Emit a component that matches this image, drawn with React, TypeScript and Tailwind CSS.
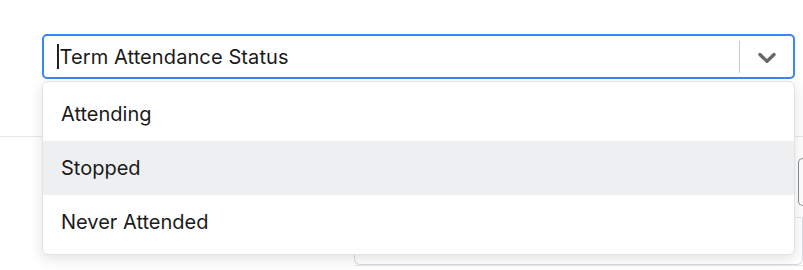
import React from "react";

export default function App() {
  const font = { fontFamily: 'Inter, "Noto Sans", sans-serif' };
  return (
    <div className="relative w-[803px] h-[270px] bg-white overflow-hidden text-[#1a1a1a]" style={font}>
      {/* header with select control */}
      <div className="h-[137px] border-b border-[#e5e7eb] pt-[34px] pl-[42px] pr-[8px]">
        <div className="flex h-[45px] items-center rounded-[5px] border-2 border-[#3d84f7] bg-white">
          <div className="flex flex-1 items-center pl-[13px]">
            <span className="h-[25px] w-[1.5px] bg-[#222]" />
            <span className="pl-[1px] text-[20px] leading-none tracking-[0.1px]">Term Attendance Status</span>
          </div>
          <span className="h-[32px] w-px bg-[#cccccc]" />
          <div className="flex w-[53px] items-center justify-center">
            <svg width="30" height="30" viewBox="0 0 20 20" fill="#666666">
              <path d="M4.516 7.548c0.436-0.446 1.043-0.481 1.576 0l3.908 3.747 3.908-3.747c0.533-0.481 1.141-0.446 1.574 0 0.436 0.445 0.408 1.197 0 1.615-0.406 0.418-4.695 4.502-4.695 4.502-0.217 0.223-0.502 0.335-0.787 0.335s-0.57-0.112-0.789-0.335c0 0-4.287-4.084-4.695-4.502s-0.436-1.17 0-1.615z" />
            </svg>
          </div>
        </div>
      </div>

      {/* underlying page content */}
      <div className="pt-[21px]">
        <div className="ml-[798px] h-[48px] rounded-l-[7px] border border-r-0 border-[#8a8f98]" />
        <div className="mt-[11px] ml-[354px] border-t border-[#e5e7eb]" />
        <div className="ml-[354px] h-[47px] rounded-b-[6px] border border-t-0 border-[#d8dbe0]" />
        <div className="ml-[354px] border-t border-[#e5e7eb]" />
      </div>

      {/* menu */}
      <div className="absolute left-[42px] top-[81px] w-[753px] rounded-[6px] border border-[#e3e3e3] bg-white py-[5px] shadow-[0_4px_14px_rgba(0,0,0,0.12)]">
        <div className="flex h-[54px] items-center pl-[18px] text-[20px]">Attending</div>
        <div className="flex h-[54px] items-center bg-[#eeeff1] pl-[18px] text-[20px]">Stopped</div>
        <div className="flex h-[54px] items-center pl-[18px] text-[20px]">Never Attended</div>
      </div>
    </div>
  );
}
